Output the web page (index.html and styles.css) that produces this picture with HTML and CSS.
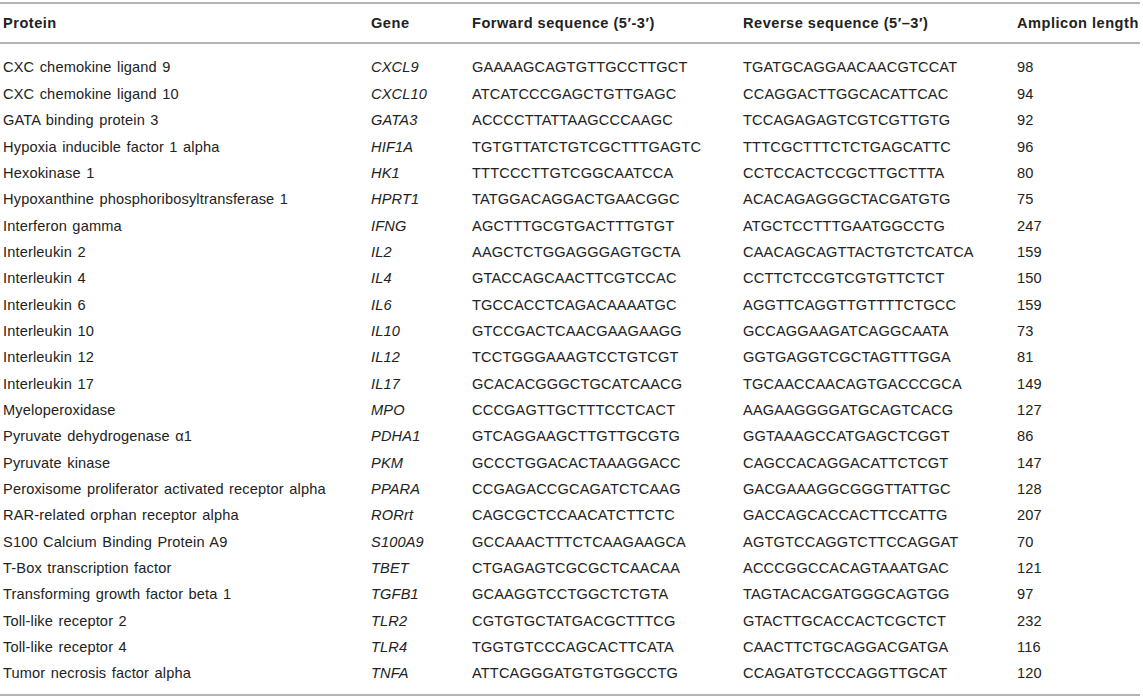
FILE: index.html
```html
<!DOCTYPE html>
<html>
<head>
<meta charset="utf-8">
<link rel="stylesheet" href="styles.css">
</head>
<body>
<div class="table">
  <div class="row head">
    <div class="c">Protein</div><div class="c">Gene</div><div class="c">Forward sequence (5′-3′)</div><div class="c">Reverse sequence (5′–3′)</div><div class="c">Amplicon length</div>
  </div>
  <div class="body">
    <div class="row"><div class="c">CXC chemokine ligand 9</div><div class="c g">CXCL9</div><div class="c">GAAAAGCAGTGTTGCCTTGCT</div><div class="c">TGATGCAGGAACAACGTCCAT</div><div class="c">98</div></div>
    <div class="row"><div class="c">CXC chemokine ligand 10</div><div class="c g">CXCL10</div><div class="c">ATCATCCCGAGCTGTTGAGC</div><div class="c">CCAGGACTTGGCACATTCAC</div><div class="c">94</div></div>
    <div class="row"><div class="c">GATA binding protein 3</div><div class="c g">GATA3</div><div class="c">ACCCCTTATTAAGCCCAAGC</div><div class="c">TCCAGAGAGTCGTCGTTGTG</div><div class="c">92</div></div>
    <div class="row"><div class="c">Hypoxia inducible factor 1 alpha</div><div class="c g">HIF1A</div><div class="c">TGTGTTATCTGTCGCTTTGAGTC</div><div class="c">TTTCGCTTTCTCTGAGCATTC</div><div class="c">96</div></div>
    <div class="row"><div class="c">Hexokinase 1</div><div class="c g">HK1</div><div class="c">TTTCCCTTGTCGGCAATCCA</div><div class="c">CCTCCACTCCGCTTGCTTTA</div><div class="c">80</div></div>
    <div class="row"><div class="c">Hypoxanthine phosphoribosyltransferase 1</div><div class="c g">HPRT1</div><div class="c">TATGGACAGGACTGAACGGC</div><div class="c">ACACAGAGGGCTACGATGTG</div><div class="c">75</div></div>
    <div class="row"><div class="c">Interferon gamma</div><div class="c g">IFNG</div><div class="c">AGCTTTGCGTGACTTTGTGT</div><div class="c">ATGCTCCTTTGAATGGCCTG</div><div class="c">247</div></div>
    <div class="row"><div class="c">Interleukin 2</div><div class="c g">IL2</div><div class="c">AAGCTCTGGAGGGAGTGCTA</div><div class="c">CAACAGCAGTTACTGTCTCATCA</div><div class="c">159</div></div>
    <div class="row"><div class="c">Interleukin 4</div><div class="c g">IL4</div><div class="c">GTACCAGCAACTTCGTCCAC</div><div class="c">CCTTCTCCGTCGTGTTCTCT</div><div class="c">150</div></div>
    <div class="row"><div class="c">Interleukin 6</div><div class="c g">IL6</div><div class="c">TGCCACCTCAGACAAAATGC</div><div class="c">AGGTTCAGGTTGTTTTCTGCC</div><div class="c">159</div></div>
    <div class="row"><div class="c">Interleukin 10</div><div class="c g">IL10</div><div class="c">GTCCGACTCAACGAAGAAGG</div><div class="c">GCCAGGAAGATCAGGCAATA</div><div class="c">73</div></div>
    <div class="row"><div class="c">Interleukin 12</div><div class="c g">IL12</div><div class="c">TCCTGGGAAAGTCCTGTCGT</div><div class="c">GGTGAGGTCGCTAGTTTGGA</div><div class="c">81</div></div>
    <div class="row"><div class="c">Interleukin 17</div><div class="c g">IL17</div><div class="c">GCACACGGGCTGCATCAACG</div><div class="c">TGCAACCAACAGTGACCCGCA</div><div class="c">149</div></div>
    <div class="row"><div class="c">Myeloperoxidase</div><div class="c g">MPO</div><div class="c">CCCGAGTTGCTTTCCTCACT</div><div class="c">AAGAAGGGGATGCAGTCACG</div><div class="c">127</div></div>
    <div class="row"><div class="c">Pyruvate dehydrogenase α1</div><div class="c g">PDHA1</div><div class="c">GTCAGGAAGCTTGTTGCGTG</div><div class="c">GGTAAAGCCATGAGCTCGGT</div><div class="c">86</div></div>
    <div class="row"><div class="c">Pyruvate kinase</div><div class="c g">PKM</div><div class="c">GCCCTGGACACTAAAGGACC</div><div class="c">CAGCCACAGGACATTCTCGT</div><div class="c">147</div></div>
    <div class="row"><div class="c">Peroxisome proliferator activated receptor alpha</div><div class="c g">PPARA</div><div class="c">CCGAGACCGCAGATCTCAAG</div><div class="c">GACGAAAGGCGGGTTATTGC</div><div class="c">128</div></div>
    <div class="row"><div class="c">RAR-related orphan receptor alpha</div><div class="c g">RORrt</div><div class="c">CAGCGCTCCAACATCTTCTC</div><div class="c">GACCAGCACCACTTCCATTG</div><div class="c">207</div></div>
    <div class="row"><div class="c">S100 Calcium Binding Protein A9</div><div class="c g">S100A9</div><div class="c">GCCAAACTTTCTCAAGAAGCA</div><div class="c">AGTGTCCAGGTCTTCCAGGAT</div><div class="c">70</div></div>
    <div class="row"><div class="c">T-Box transcription factor</div><div class="c g">TBET</div><div class="c">CTGAGAGTCGCGCTCAACAA</div><div class="c">ACCCGGCCACAGTAAATGAC</div><div class="c">121</div></div>
    <div class="row"><div class="c">Transforming growth factor beta 1</div><div class="c g">TGFB1</div><div class="c">GCAAGGTCCTGGCTCTGTA</div><div class="c">TAGTACACGATGGGCAGTGG</div><div class="c">97</div></div>
    <div class="row"><div class="c">Toll-like receptor 2</div><div class="c g">TLR2</div><div class="c">CGTGTGCTATGACGCTTTCG</div><div class="c">GTACTTGCACCACTCGCTCT</div><div class="c">232</div></div>
    <div class="row"><div class="c">Toll-like receptor 4</div><div class="c g">TLR4</div><div class="c">TGGTGTCCCAGCACTTCATA</div><div class="c">CAACTTCTGCAGGACGATGA</div><div class="c">116</div></div>
    <div class="row"><div class="c">Tumor necrosis factor alpha</div><div class="c g">TNFA</div><div class="c">ATTCAGGGATGTGTGGCCTG</div><div class="c">CCAGATGTCCCAGGTTGCAT</div><div class="c">120</div></div>
  </div>
</div>
</body>
</html>
```
FILE: styles.css
```css
html, body {
  margin: 0;
  padding: 0;
  background: #ffffff;
}
body {
  font-family: "Liberation Sans", Arial, sans-serif;
  font-size: 14.6px;
  letter-spacing: 0.15px;
  word-spacing: 1.2px;
  color: #222222;
}
.table {
  width: 1140px;
  margin-top: 2px;
  border-top: 2px solid #b4b4b4;
  border-bottom: 2px solid #b4b4b4;
}
.row {
  display: grid;
  grid-template-columns: 368px 101px 271px 274px 1fr;
  align-items: center;
  height: 26.35px;
}
.row.head {
  height: 38px;
  font-weight: bold;
  letter-spacing: 0.5px;
  word-spacing: 0;
  border-bottom: 2px solid #b4b4b4;
}
.body {
  padding-top: 10.3px;
  padding-bottom: 7.3px;
}
.c {
  padding-left: 3px;
  white-space: nowrap;
  line-height: 16px;
}
.g {
  font-style: italic;
}
```
